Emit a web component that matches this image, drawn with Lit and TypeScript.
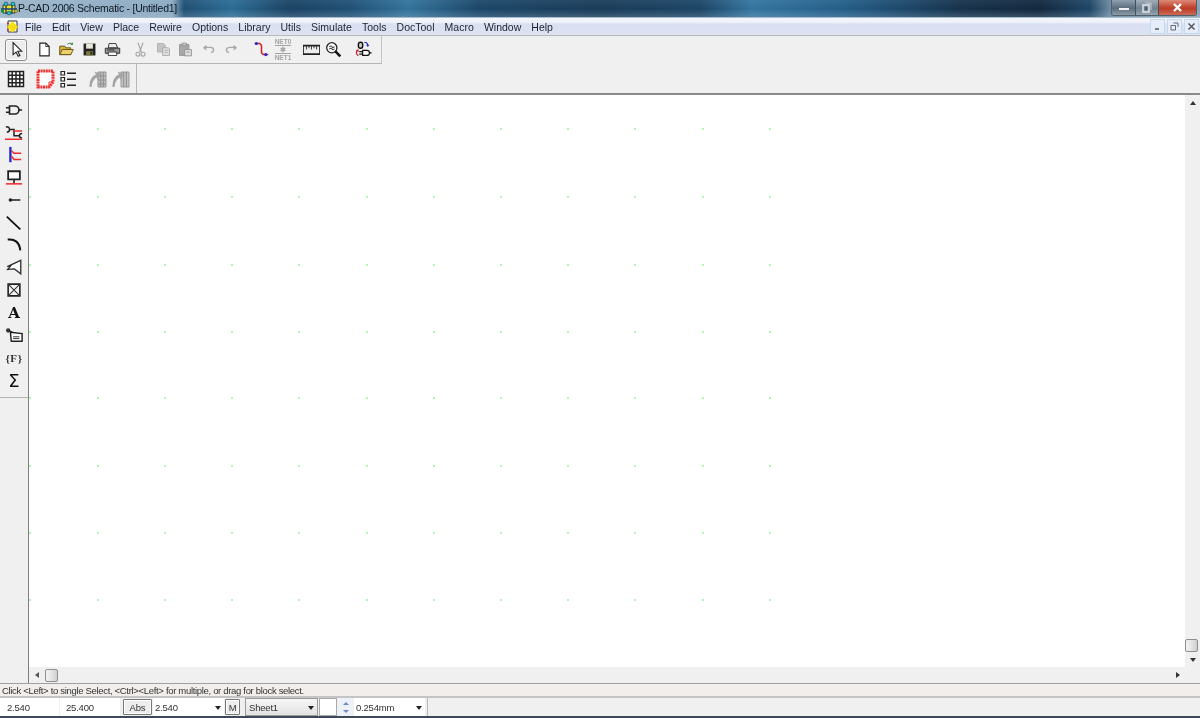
import { LitElement, html, css, svg } from "lit";
import { customElement } from "lit/decorators.js";

const MENUS = ["File", "Edit", "View", "Place", "Rewire", "Options", "Library", "Utils", "Simulate", "Tools", "DocTool", "Macro", "Window", "Help"];
const GRID_X = [29, 97, 164, 231, 298, 366, 433, 500, 567, 634, 702, 769];
const GRID_Y = [128, 196, 264, 331, 397, 465, 532, 599];

// toolbar icons, all on a 20x20 box
const ICONS: Record<string, unknown> = {
  arrow: svg`<path d="M6 2v14l3.500-3 2.500 5 2-1-2.500-5H16z" fill="#fff" stroke="#222" stroke-width="1.300"/>`,
  newFile: svg`<path d="M4.500 2.500h7l4 4v11h-11z" fill="#fff" stroke="#222" stroke-width="1.300"/><path d="M11.500 2.500v4h4" fill="none" stroke="#222"/>`,
  open: svg`<path d="M2 6h6l1 2h6v8H2z" fill="#d9b13c" stroke="#5a4a10"/><path d="M2 16l3-6h13l-3 6z" fill="#ecd069" stroke="#5a4a10"/><path d="M11 4c2-2 4-2 6 0m0 0v-2m0 2h-2" fill="none" stroke="#1f6f2f"/>`,
  save: svg`<path d="M3 3h14v14H3z" fill="#222"/><path d="M6 3h8v6H6z" fill="#e8e8d8"/><path d="M6 12h8v5H6z" fill="#7a7a3a"/><path d="M11 13h2v3h-2z" fill="#222"/>`,
  print: svg`<path d="M6 3h8l2 5H5z" fill="#eee" stroke="#222"/><path d="M1.500 8.500h17v6h-17z" fill="#999" stroke="#222"/><path d="M5 13h10v4H5z" fill="#fff" stroke="#222"/><path d="M3.500 10.500h9" stroke="#222"/>`,
  cut: svg`<path d="M7 2l4 11M13 2L9 13" stroke="#a4a4a4" stroke-width="1.300" fill="none"/><circle cx="7" cy="15.500" r="2.300" fill="none" stroke="#a4a4a4" stroke-width="1.300"/><circle cx="13" cy="15.500" r="2.300" fill="none" stroke="#a4a4a4" stroke-width="1.300"/>`,
  copy: svg`<path d="M3 3h7l2 2v8H3z" fill="#c4c4c4" stroke="#aaa"/><path d="M9 8h7l1 1v8H9z" fill="#e0e0e0" stroke="#a4a4a4"/><path d="M11 11h4M11 13.500h4" stroke="#aaa"/>`,
  paste: svg`<path d="M3 4h11v13H3z" fill="#a8a8a8" stroke="#909090"/><path d="M6 2.500h5v3H6z" fill="#c8c8c8" stroke="#909090"/><path d="M9 10h8v7.500H9z" fill="#ddd" stroke="#909090"/><path d="M11 13h4" stroke="#999"/>`,
  undo: svg`<path d="M6 7.500h6c3 0 4 1.500 4 3s-1 2.500-3 3" fill="none" stroke="#a8a8a8" stroke-width="1.600"/><path d="M7.500 4.500L3.500 8l4 3.200z" fill="#a8a8a8"/>`,
  redo: svg`<path d="M14 7.500H8c-3 0-4 1.500-4 3s1 2.500 3 3" fill="none" stroke="#a8a8a8" stroke-width="1.600"/><path d="M12.500 4.500l4 3.500-4 3.200z" fill="#a8a8a8"/>`,
  route: svg`<path d="M2 3h6l2 2v9l2 2h6" fill="none" stroke="#d8202a" stroke-width="1.800"/><circle cx="4" cy="3" r="1.800" fill="#1c2ad8"/><circle cx="15" cy="16" r="1.800" fill="#1c2ad8"/>`,
  ruler: svg`<path d="M0 5.500h20v10H0z" fill="#eee" stroke="#222" stroke-width="2"/><path d="M4 6v4M7 6v2.500M10 6v4M13 6v2.500M16 6v4" stroke="#222"/>`,
  zoom: svg`<circle cx="8" cy="8" r="6" fill="#fff" stroke="#222" stroke-width="1.500"/><path d="M5 7c1.500-2 3-1 3.500 0s2 1 2.500-.5M5 9.500c1.500-1.500 3-1 3.500 0s2 1 2.500-.5" fill="none" stroke="#444" stroke-width="1.200"/><path d="M12 12l6 6" stroke="#111" stroke-width="3"/>`,
  compare: svg`<rect x="4" y="1.500" width="5" height="7" rx="2.300" fill="#ccc" stroke="#111" stroke-width="1.700"/><path d="M11 1.500c3 0 4 1.500 4 4" fill="none" stroke="#1c2ad8" stroke-width="1.400"/><path d="M13 4.500h4l-2 2.500z" fill="#1c2ad8"/><path d="M9 11h5a3 3 0 0 1 0 6H9zM5 12.500h4M5 15.500h4M17 14h2.500" fill="#fff" stroke="#111" stroke-width="1.400"/><path d="M3 11c-2 1-2 4 1 6.500" fill="none" stroke="#d8202a" stroke-width="1.400"/><path d="M1 11.500l3-2 .5 3z" fill="#d8202a"/>`,
  table: svg`<path d="M2.500 2.500h15v15h-15z" fill="#fff" stroke="#222" stroke-width="1.500"/><path d="M2.500 6.200h15M2.500 10h15M2.500 13.800h15M6.200 2.500v15M10 2.500v15M13.800 2.500v15" stroke="#222" stroke-width="1.500"/>`,
  board: svg`<path d="M2 2h15v11l-4 5H2z" fill="#fff" stroke="#ee3030" stroke-width="3" stroke-dasharray="2 .6"/><path d="M13 18v-5h4" fill="none" stroke="#ee3030"/>`,
  list: svg`<path d="M3 2.500h3.500V6H3zM3 8.500h3.500V12H3zM3 14.500h3.500V18H3z" fill="#fff" stroke="#222" stroke-width="1.200"/><path d="M9 4.200h9M9 10.200h9M9 16.200h9" stroke="#222" stroke-width="1.500"/>`,
  greyA: svg`<path d="M10 3h8v15h-8z" fill="#c0c0c0" stroke="#999"/><path d="M12.700 3v15M15.300 3v15M10 7h8M10 11h8M10 15h8" stroke="#8e8e8e"/><path d="M1.500 18C1.500 11 4 7 8 5.500L6.500 2.500 13 5l-3.500 6-1-2.500C6 10 4 13 3.500 18z" fill="#a4a4a4"/>`,
  greyB: svg`<path d="M10 3h8v15h-8z" fill="#c4c4c4" stroke="#999"/><path d="M12.700 3v15M15.300 3v15" stroke="#8e8e8e"/><path d="M1.500 18C1.500 11 4 7 8 5.500L6.500 2.500 13 5l-3.500 6-1-2.500C6 10 4 13 3.500 18z" fill="#a4a4a4"/>`,
  pin: svg`<path d="M5 5h6a4.500 4.500 0 0 1 0 9H5z" fill="none" stroke="#222" stroke-width="1.800" transform="translate(0 .5)"/><path d="M1 7.500h4M1 12.500h4M15.500 10H19" stroke="#222" stroke-width="1.800"/>`,
  wires: svg`<path d="M1 3c3 0 4 1 4 3s-1 3-3 3M5 6h5v7h6M19 10.500c-2 0-3 1-3 2.500s1 2.500 3 2.500" fill="none" stroke="#222" stroke-width="1.700"/><path d="M9 7.800h10M0 17h19" stroke="#ef2b2b" stroke-width="1.600"/>`,
  bus: svg`<path d="M6 1v17" stroke="#1c2ad8" stroke-width="2.600"/><path d="M7 5l3 3h8M7 11l3 4h8" fill="none" stroke="#ef2b2b" stroke-width="1.700"/>`,
  block: svg`<path d="M3.500 2.500h13v9h-13z" fill="#fff" stroke="#222" stroke-width="2"/><path d="M10 11.500V16" stroke="#222" stroke-width="1.800"/><path d="M1 16.500h18" stroke="#ef2b2b" stroke-width="1.700"/>`,
  dash: svg`<circle cx="6" cy="10" r="2" fill="#222"/><path d="M6 10h11" stroke="#222" stroke-width="1.700"/>`,
  line: svg`<path d="M2 3l15 14" stroke="#111" stroke-width="2"/>`,
  arc: svg`<path d="M3 4c8-1 13 3 14 12" fill="none" stroke="#111" stroke-width="2.200"/>`,
  poly: svg`<path d="M17.500 1.500v15L10.500 11 3 11.500 7 7 2.500 8.500z" fill="#fff" stroke="#333" stroke-width="1.500"/>`,
  field: svg`<path d="M3.500 3.500h13v13h-13z" fill="#f4f4f4" stroke="#222" stroke-width="1.800"/><path d="M3.500 3.500l13 13M16.500 3.500l-13 13" stroke="#333" stroke-width="1.200"/>`,
  tag: svg`<path d="M6 7l13 1.500V17H7z" fill="#fff" stroke="#222" stroke-width="1.600"/><path d="M9 12h7M9 14h7" stroke="#222"/><circle cx="3.500" cy="5" r="2.400" fill="#333"/><path d="M4.500 5c2 1 3 2 4 2" stroke="#222" stroke-width="1.500"/>`,
};

@customElement("app-root")
export class AppRoot extends LitElement {
  static styles = css`
    :host {
      display: flex;
      flex-direction: column;
      width: 1200px;
      height: 718px;
      overflow: hidden;
      background: #f0f0f0;
      font-family: "Liberation Sans", Arial, sans-serif;
      font-size: 10.5px;
      color: #222;
      filter: blur(0.3px);
    }
    svg { display: block; width: 20px; height: 20px; }

    .title {
      display: flex;
      align-items: flex-start;
      height: 18px;
      box-sizing: border-box;
      flex: none;
      border-bottom: 1px solid #a9bccb;
      background:
        linear-gradient(180deg, rgba(255,255,255,.06) 0, rgba(255,255,255,0) 9px, rgba(190,205,220,.22) 100%),
        linear-gradient(90deg, #9cb5c9 0, #8cabc4 172px, #1f4f72 184px, #2b6c95 232px, #1a4263 290px, #1f5076 350px, #33739c 408px, #1b4668 480px, #1a3c59 600px, #1c4566 700px, #33759f 752px, #235d88 846px, #16324c 960px, #12283f 1040px, #1e4667 1090px, #6b8aa0 1110px, #8ca2b4 1200px);
    }
    .logo { width: 18px; height: 15px; flex: none; margin-top: 1px; }
    .title-text { margin: 1px 0 0 0; font-size: 10.5px; letter-spacing: -0.25px; line-height: 14px; color: #101820; white-space: nowrap; }
    .win-btns { display: flex; margin-left: auto; margin-right: 3px; height: 15px; border: 1px solid #50606e; border-top: 0; border-radius: 0 0 3px 3px; overflow: hidden; }
    .win-btns div { display: flex; align-items: center; justify-content: center; }
    .w-min { width: 23px; background: linear-gradient(180deg, #8fa0ae, #5b6d7d 55%, #8d9ba7); border-right: 1px solid #40505e; }
    .w-min i { width: 10px; height: 2px; background: #eef0f2; margin-top: 3px; }
    .w-max { width: 22px; background: linear-gradient(180deg, #a0aeb9, #6f808e 55%, #95a3ae); border-right: 1px solid #40505e; }
    .w-max svg { width: 10px; height: 11px; }
    .w-close { width: 37px; background: linear-gradient(180deg, #dd8a78, #bd3c26 55%, #c96a55); }
    .w-close svg { width: 11px; height: 11px; }

    .menubar {
      display: flex;
      align-items: center;
      height: 18px;
      box-sizing: border-box;
      flex: none;
      background: linear-gradient(180deg, #f3f5fc 0, #f1f3fb 4px, #dae0f1 6px, #dde3f3 100%);
      border-bottom: 1px solid #b9b9b9;
      padding-left: 6px;
    }
    .doc-icon { width: 13px; height: 14px; flex: none; margin-right: 6px; }
    .menu { padding-right: 10.1px; line-height: 14px; color: #1c2230; white-space: nowrap; }
    .mdi { display: flex; margin-left: auto; gap: 2px; margin-right: 1px; }
    .mdi div { width: 15px; height: 15px; display: flex; align-items: center; justify-content: center; background: #e4edf8; border: 1px solid #c7d9ec; box-sizing: border-box; }
    .mdi svg { width: 9px; height: 9px; }

    .toolrows { flex: none; display: flex; flex-direction: column; border-bottom: 2px solid #8a8a8a; }
    .toolrow1 { display: flex; align-items: center; height: 28px; width: 382px; padding-left: 5px; box-sizing: border-box; border-bottom: 1px solid #b4b4b4; border-right: 1px solid #c4c4c4; }
    .toolrow2 { display: flex; align-items: center; height: 29px; padding-left: 5px; }
    .tb { width: 22.6px; height: 22px; display: flex; align-items: center; justify-content: center; flex: none; }
    .toolrow1 .tb svg { width: 17px; height: 17px; }
    .tb.on { width: 22px; border: 1px solid #8a8a8a; border-radius: 3px; background: #ececec; box-shadow: inset 0 0 0 1px #fff; box-sizing: border-box; }
    .gap6 { width: 6px; flex: none; }
    .gap7 { width: 7px; flex: none; }
    .gap8 { width: 8px; flex: none; }
    .netswap { width: 20px; flex: none; display: flex; flex-direction: column; align-items: center; color: #a4a4a4; font-size: 6.500px; font-weight: bold; line-height: 7px; }
    .netswap b { display: block; width: 16px; height: 1px; background: #a4a4a4; }
    .row2-sep { align-self: stretch; width: 1px; background: #b8b8b8; margin-left: 4px; }

    .main { flex: 1; display: flex; min-height: 0; }
    .side { flex: none; width: 28px; background: #f0f0f0; border-right: 1px solid #7f7f7f; padding-top: 4px; }
    .side-tools { display: flex; flex-direction: column; align-items: center; height: 298px; border-bottom: 1px solid #b4b4b4; width: 28px; }
    .side-tools div { height: 22.5px; flex: none; display: flex; align-items: center; justify-content: center; width: 28px; }
    .side svg { width: 18px; height: 18px; }
    .glyph { font-family: "DejaVu Serif", serif; color: #111; }
    .glyph.a { font-size: 15px; font-weight: bold; }
    .glyph.f { font-family: "Liberation Serif", serif; font-size: 11px; font-weight: bold; letter-spacing: .6px; color: #333; }
    .glyph.s { font-family: "DejaVu Sans", sans-serif; font-size: 18px; }

    .work { flex: 1; display: flex; flex-direction: column; min-width: 0; }
    .canvas-row { flex: 1; display: flex; min-height: 0; }
    .canvas { flex: 1; position: relative; background: #fff; }
    .dot { position: absolute; width: 2px; height: 2px; background: #b4f4b4; }
    .vscroll { flex: none; width: 15px; display: flex; flex-direction: column; background: #f0f0f0; }
    .arrow-u, .arrow-d, .arrow-l, .arrow-r { width: 0; height: 0; border-style: solid; border-color: transparent; }
    .arrow-u { border-width: 0 3.500px 4px; border-bottom-color: #333; }
    .arrow-d { border-width: 4px 3.500px 0; border-top-color: #333; }
    .arrow-l { border-width: 3.500px 4px 3.500px 0; border-right-color: #555; }
    .arrow-r { border-width: 3.500px 0 3.500px 4px; border-left-color: #333; }
    .sbtn { flex: none; width: 15px; height: 15px; display: flex; align-items: center; justify-content: center; }
    .vspace { flex: 1; }
    .vthumb { height: 13px; width: 13px; flex: none; }
    .thumb { box-sizing: border-box; border: 1px solid #8e8f8f; border-radius: 2px; background: linear-gradient(90deg, #f3f3f3, #e4e4e4 50%, #cfcfcf); }
    .hscroll { flex: none; height: 16px; display: flex; align-items: center; background: #f0f0f0; }
    .hthumb { width: 13px; height: 13px; flex: none; margin-left: 1px; }
    .hspace { flex: 1; }
    .corner { flex: none; width: 15px; }

    .status { flex: none; height: 12px; line-height: 13px; padding-left: 2px; background: #f1eeeb; border-top: 1px solid #a0a0a0; border-bottom: 2px solid #c4c4c4; color: #333; font-size: 9.5px; letter-spacing: -0.32px; white-space: nowrap; }
    .bottom { flex: none; height: 18px; display: flex; align-items: stretch; background: #f0f0f0; gap: 1px; font-size: 9.5px; letter-spacing: -0.2px; border-bottom: 2px solid #3c4a58; }
    .cell { background: #fff; display: flex; align-items: center; box-sizing: border-box; white-space: nowrap; color: #333; }
    .x { width: 59px; padding-left: 7px; }
    .y { width: 60px; padding-left: 6px; }
    .push { display: flex; align-items: center; justify-content: center; border: 1px solid #777; background: #ededed; margin: 1px 0; border-radius: 1px; box-sizing: border-box; color: #333; }
    .abs { width: 29px; margin-left: 2px; box-shadow: inset 0 0 0 1px #fff; }
    .m { width: 15px; margin: 1px 4px 1px 0; box-shadow: inset 0 0 0 1px #fff; }
    .combo { justify-content: space-between; padding: 0 3px 0 2px; }
    .combo i { border-style: solid; border-width: 4px 3.500px 0; border-color: #222 transparent transparent; margin-top: 2px; }
    .c-grid { width: 71px; }
    .sheet { width: 73px; border: 1px solid #9a9a9a; background: linear-gradient(#f6f6f6, #e2e2e2); padding-left: 3px; }
    .swatch { width: 18px; border: 1px solid #aaa; }
    .spin { width: 15px; display: flex; flex-direction: column; align-items: center; justify-content: space-around; padding: 1px 0; box-sizing: border-box; background: #eef2f8; }
    .spin .up { width: 0; border-style: solid; border-width: 0 3px 3px; border-color: transparent transparent #6a8cc0; }
    .spin .dn { width: 0; border-style: solid; border-width: 3px 3px 0; border-color: #6a8cc0 transparent transparent; }
    .c-snap { width: 71px; }
    .last { width: 772px; margin-left: 1px; border-left: 1px solid #bbb; background: #f0f0f0; }
  `;

  icon(name: string) {
    return html`<svg viewBox="0 0 20 20">${ICONS[name]}</svg>`;
  }

  tb(name: string, on = false) {
    return html`<div class="tb ${on ? "on" : ""}">${this.icon(name)}</div>`;
  }

  render() {
    const dots = GRID_Y.flatMap((y) => GRID_X.map((x) => [x, y]));
    return html`
      <div class="title">
        <svg class="logo" viewBox="0 0 18 15">
          <path d="M3 4h12v8H3z" fill="#f2e21e" stroke="#123" stroke-width=".8"/>
          <path d="M1 8h16M6 2v11M12 2v11" stroke="#1a3f80" stroke-width="1.300"/>
          <circle cx="6" cy="3" r="1.900" fill="#1fc8d0" stroke="#123" stroke-width=".5"/>
          <circle cx="13" cy="3" r="1.900" fill="#1fc8d0" stroke="#123" stroke-width=".5"/>
          <circle cx="9" cy="12" r="1.900" fill="#1fc8d0" stroke="#123" stroke-width=".5"/>
          <circle cx="2.500" cy="10" r="1.700" fill="#1e9040"/>
          <circle cx="16" cy="10" r="1.500" fill="#f2e21e" stroke="#123" stroke-width=".5"/>
        </svg>
        <span class="title-text">P-CAD 2006 Schematic - [Untitled1]</span>
        <div class="win-btns">
          <div class="w-min"><i></i></div>
          <div class="w-max">
            <svg viewBox="0 0 10 11"><path d="M3.500 1h5.500v7" fill="none" stroke="#c8d0d6"/><path d="M1 3h6v7H1z" fill="none" stroke="#dfe4e8" stroke-width="1.500"/><path d="M3 5h2v3H3z" fill="#4b5a66"/></svg>
          </div>
          <div class="w-close"><svg viewBox="0 0 11 11"><path d="M2 2l7 7M9 2l-7 7" stroke="#fff" stroke-width="2.400"/></svg></div>
        </div>
      </div>

      <div class="menubar">
        <svg class="doc-icon" viewBox="0 0 13 14">
          <path d="M2 1h9v11H2z" fill="#fffbe0" stroke="#333"/>
          <path d="M6.500 1.500L12 7l-5.500 5.500L1 7z" fill="#f8de10"/>
          <path d="M1 3.500h2M1 10h2" stroke="#c02020"/>
        </svg>
        ${MENUS.map((m) => html`<span class="menu">${m}</span>`)}
        <div class="mdi">
          <div><svg viewBox="0 0 9 9"><path d="M2 7h4" stroke="#556" stroke-width="1.500"/></svg></div>
          <div><svg viewBox="0 0 9 9"><path d="M3.500 1h4.500v4M1 3.500h4.500V8H1z" fill="none" stroke="#667"/></svg></div>
          <div><svg viewBox="0 0 9 9"><path d="M1.500 1.500l6 6M7.500 1.500l-6 6" stroke="#556" stroke-width="1.500"/></svg></div>
        </div>
      </div>

      <div class="toolrows">
        <div class="toolrow1">
          ${this.tb("arrow", true)}
          <div class="gap6"></div>
          ${this.tb("newFile")}${this.tb("open")}${this.tb("save")}${this.tb("print")}
          <div class="gap6"></div>
          ${this.tb("cut")}${this.tb("copy")}${this.tb("paste")}${this.tb("undo")}${this.tb("redo")}
          <div class="gap8"></div>
          ${this.tb("route")}
          <div class="netswap"><span>NET0</span><b></b><span>✱</span><b></b><span>NET1</span></div>
          <div class="gap7"></div>
          ${this.tb("ruler")}${this.tb("zoom")}
          <div class="gap7"></div>
          ${this.tb("compare")}
        </div>
        <div class="toolrow2">
          ${this.tb("table")}
          <div class="gap7"></div>
          ${this.tb("board")}${this.tb("list")}
          <div class="gap7"></div>
          ${this.tb("greyA")}${this.tb("greyB")}
          <div class="row2-sep"></div>
        </div>
      </div>

      <div class="main">
        <div class="side">
          <div class="side-tools">
            ${["pin", "wires", "bus", "block", "dash", "line", "arc", "poly", "field"].map((n) => html`<div>${this.icon(n)}</div>`)}
            <div class="glyph a">A</div>
            <div>${this.icon("tag")}</div>
            <div class="glyph f">{F}</div>
            <div class="glyph s">Σ</div>
          </div>
        </div>
        <div class="work">
          <div class="canvas-row">
            <div class="canvas">
              ${dots.map(([x, y]) => html`<i class="dot" style="left:${x - 29}px;top:${y - 95}px"></i>`)}
            </div>
            <div class="vscroll">
              <div class="sbtn"><i class="arrow-u"></i></div>
              <div class="vspace"></div>
              <div class="vthumb thumb"></div>
              <div class="sbtn"><i class="arrow-d"></i></div>
            </div>
          </div>
          <div class="hscroll">
            <div class="sbtn"><i class="arrow-l"></i></div>
            <div class="hthumb thumb"></div>
            <div class="hspace"></div>
            <div class="sbtn"><i class="arrow-r"></i></div>
            <div class="corner"></div>
          </div>
        </div>
      </div>

      <div class="status">Click &lt;Left&gt; to single Select, &lt;Ctrl&gt;&lt;Left&gt; for multiple, or drag for block select.</div>
      <div class="bottom">
        <div class="cell x">2.540</div>
        <div class="cell y">25.400</div>
        <div class="push abs">Abs</div>
        <div class="cell combo c-grid">2.540<i></i></div>
        <div class="push m">M</div>
        <div class="cell combo sheet">Sheet1<i></i></div>
        <div class="cell swatch"></div>
        <div class="spin"><i class="up"></i><i class="dn"></i></div>
        <div class="cell combo c-snap">0.254mm<i></i></div>
        <div class="cell last"></div>
      </div>
    `;
  }
}
